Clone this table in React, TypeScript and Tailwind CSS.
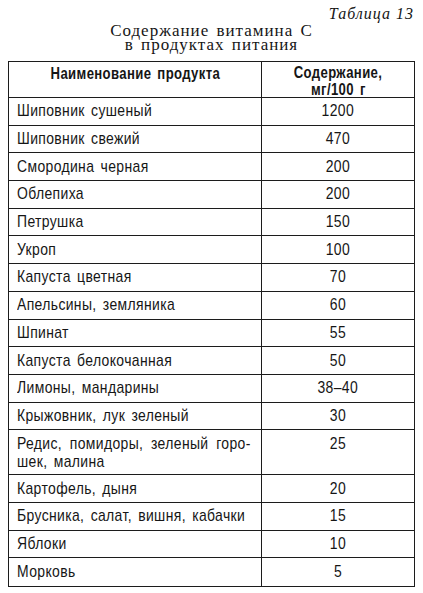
import React from "react";

const rows: [string, string][] = [
  ["Шиповник сушеный", "1200"],
  ["Шиповник свежий", "470"],
  ["Смородина черная", "200"],
  ["Облепиха", "200"],
  ["Петрушка", "150"],
  ["Укроп", "100"],
  ["Капуста цветная", "70"],
  ["Апельсины, земляника", "60"],
  ["Шпинат", "55"],
  ["Капуста белокочанная", "50"],
  ["Лимоны, мандарины", "38–40"],
  ["Крыжовник, лук зеленый", "30"],
];

const rows2: [string, string][] = [
  ["Картофель, дыня", "20"],
  ["Брусника, салат, вишня, кабачки", "15"],
  ["Яблоки", "10"],
  ["Морковь", "5"],
];

function Narrow({ children, left }: { children: React.ReactNode; left?: boolean }) {
  return (
    <span
      className={
        left
          ? "inline-block whitespace-nowrap origin-left scale-x-[0.82]"
          : "inline-block whitespace-nowrap origin-center scale-x-[0.82]"
      }
    >
      {children}
    </span>
  );
}

function Row({ name, value }: { name: string; value: string }) {
  return (
    <div className="grid grid-cols-[253px_1fr] h-[27.7px] border-b border-[#1c1c1c] last:border-b-0">
      <div className="border-r border-[#1c1c1c] flex items-center pl-[8px] overflow-hidden">
        <Narrow left>{name}</Narrow>
      </div>
      <div className="flex items-center justify-center">
        <Narrow>{value}</Narrow>
      </div>
    </div>
  );
}

export default function App() {
  return (
    <div className="w-[423px] h-[593px] bg-white text-[#161616] overflow-hidden">
      <div className="pt-[4px] pr-[9px] text-right italic font-['Liberation_Serif',serif] text-[16px] leading-[20px] h-[24px] tracking-[1px]">
        Таблица 13
      </div>
      <div className="text-center font-['Liberation_Serif',serif] text-[17px] leading-[13.5px] tracking-[1px] [word-spacing:2px]">
        <div className="h-[13.5px]">Содержание витамина С</div>
        <div className="h-[13.5px]">в продуктах питания</div>
      </div>
      <div className="mt-[10px] ml-[8px] w-[407px] border border-[#1c1c1c] font-['Liberation_Sans',Arial,sans-serif] text-[17px] leading-[18px] tracking-[0.45px] [word-spacing:2.5px]">
        <div className="grid grid-cols-[253px_1fr] h-[36px] border-b border-[#1c1c1c] font-bold text-[16px] leading-[17px]">
          <div className="border-r border-[#1c1c1c] text-center pt-[3px]">
            <Narrow>Наименование продукта</Narrow>
          </div>
          <div className="text-center pt-[2px] flex flex-col items-center">
            <Narrow>Содержание,</Narrow>
            <Narrow>мг/100 г</Narrow>
          </div>
        </div>
        {rows.map(([n, v]) => (
          <Row key={n} name={n} value={v} />
        ))}
        <div className="grid grid-cols-[253px_1fr] h-[45px] border-b border-[#1c1c1c]">
          <div className="border-r border-[#1c1c1c] pl-[8px] pt-[5px] overflow-hidden">
            <div className="w-[285px] origin-left scale-x-[0.82] flex justify-between whitespace-nowrap">
              <span>Редис,</span>
              <span>помидоры,</span>
              <span>зеленый</span>
              <span>горо-</span>
            </div>
            <div>
              <Narrow left>шек, малина</Narrow>
            </div>
          </div>
          <div className="text-center pt-[5px]">
            <Narrow>25</Narrow>
          </div>
        </div>
        {rows2.map(([n, v]) => (
          <Row key={n} name={n} value={v} />
        ))}
      </div>
    </div>
  );
}
